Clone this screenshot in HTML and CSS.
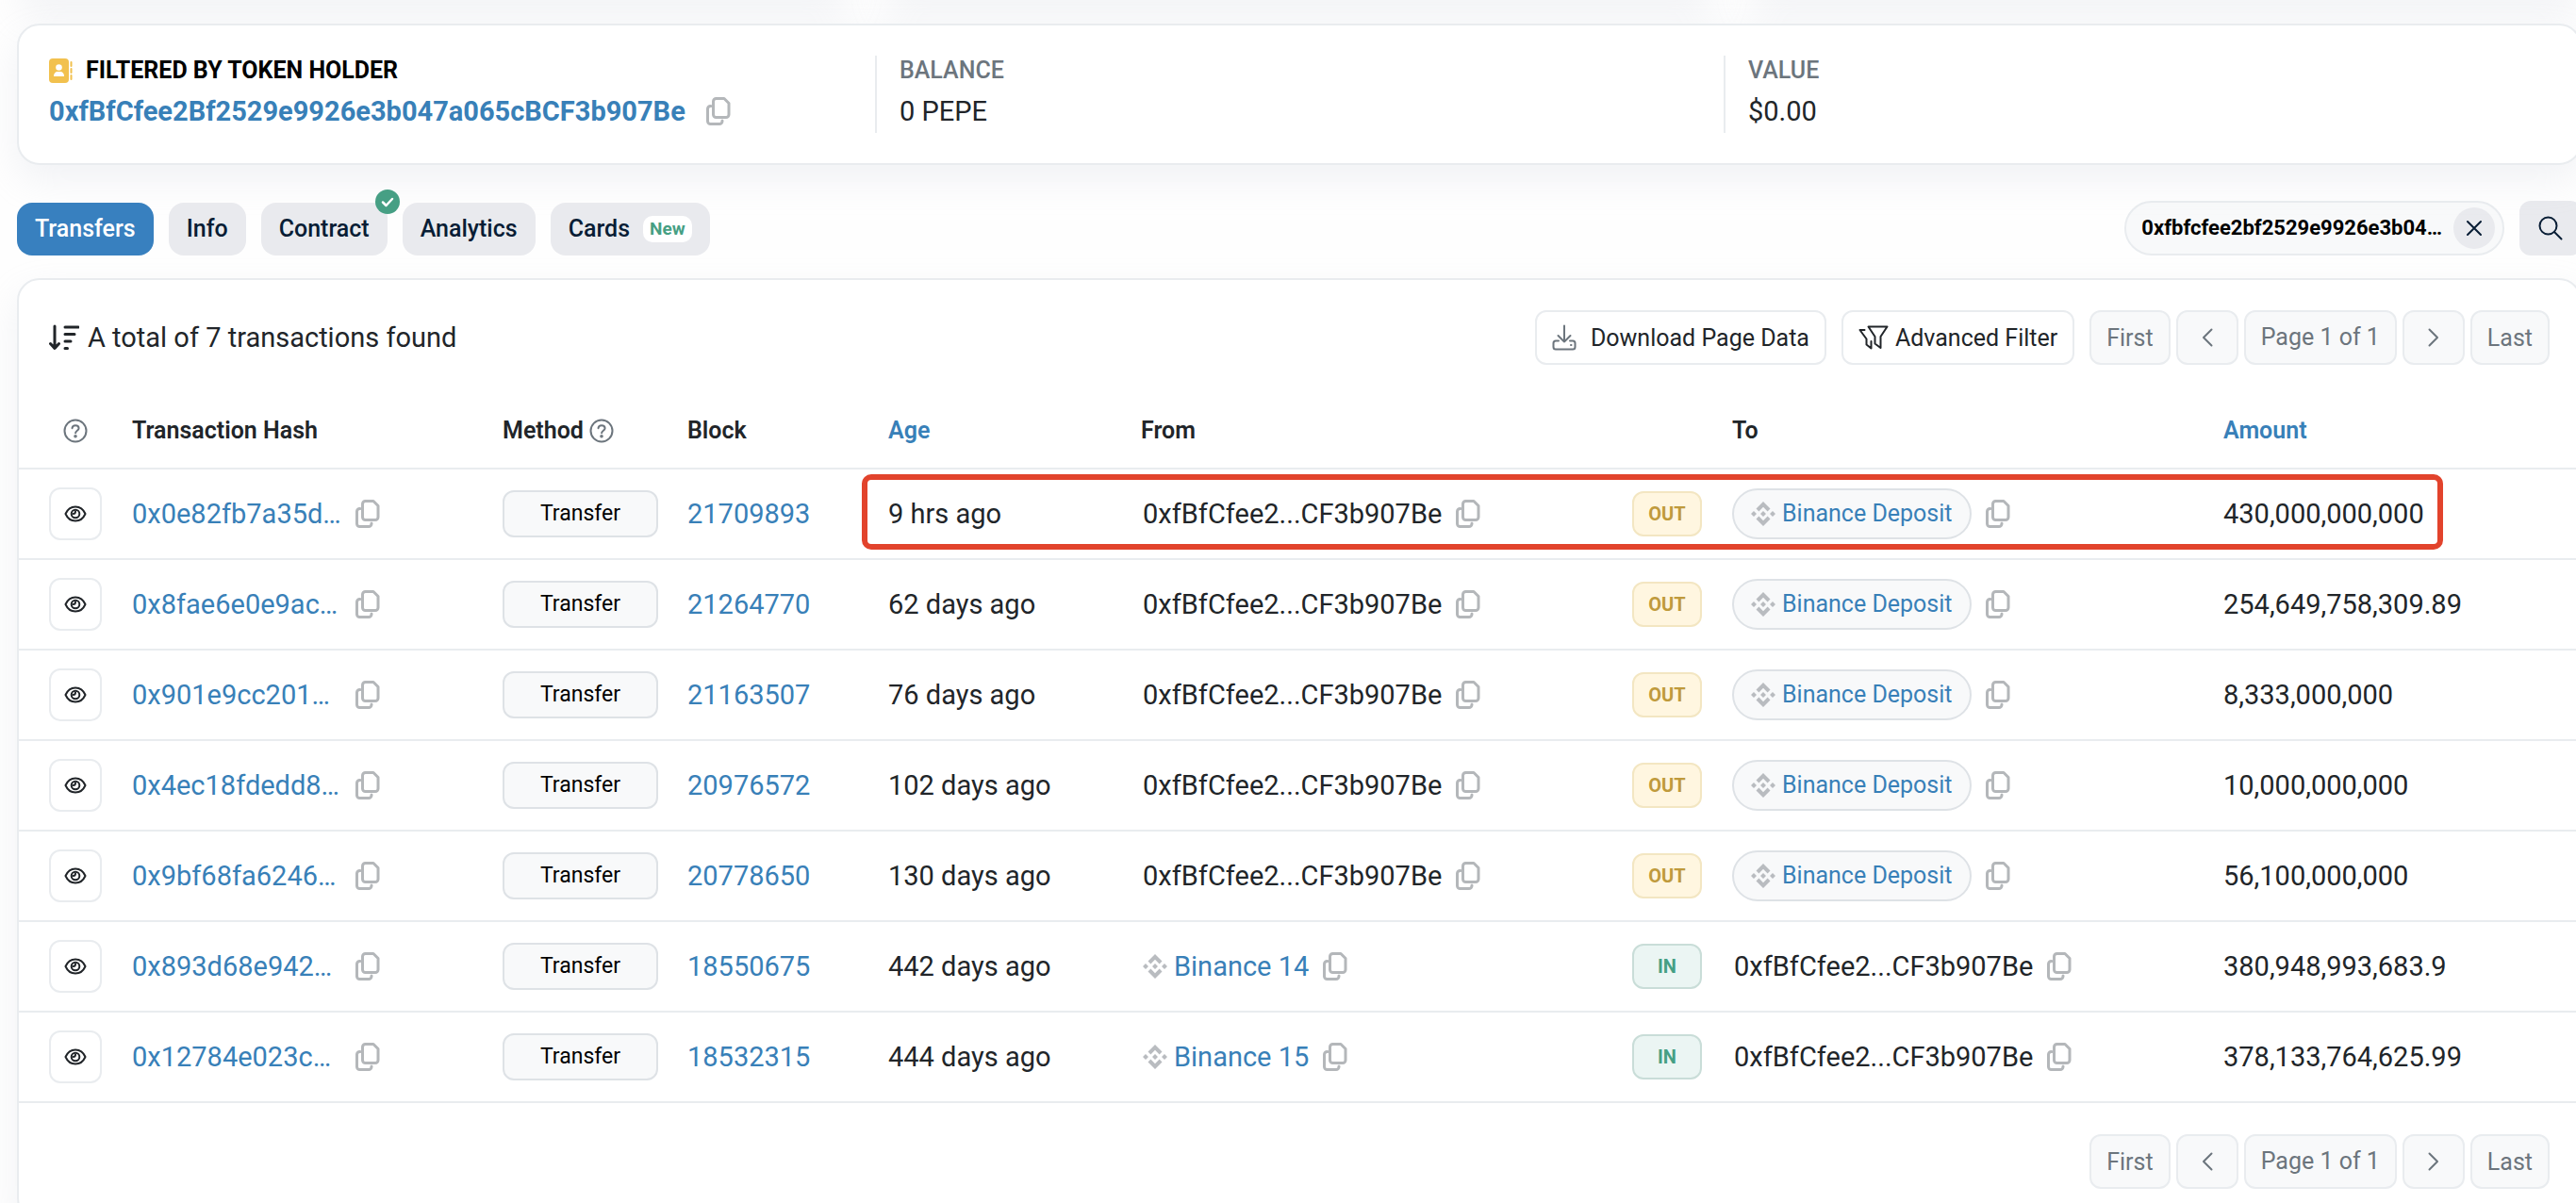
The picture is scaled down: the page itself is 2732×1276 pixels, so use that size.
FILE: index.html
```html
<!DOCTYPE html>
<html lang="en">
<head>
  <meta charset="UTF-8">
  <title>Token Transfers</title>
  <meta name="viewport" content="width=device-width, initial-scale=1.0">
  <link rel="stylesheet" href="styles.css">
</head>

<body>
  <!-- Icons -->
  <svg class="sprite" aria-hidden="true">
    <symbol id="i-copy" viewBox="0 0 26 30">
      <path d="M10.500 1.500h8.500l5 5v12a3 3 0 0 1-3 3h-10.500a3 3 0 0 1-3-3v-14a3 3 0 0 1 3-3z"/>
      <path d="M5 9.500h-.5a3 3 0 0 0-3 3v13a3 3 0 0 0 3 3h9.500a3 3 0 0 0 3-3v-.5"/>
    </symbol>
    <symbol id="i-help" viewBox="0 0 26 26">
      <circle cx="13" cy="13" r="11.500"/>
      <path d="M9.500 10.200c.2-2 1.500-3 3.500-3s3.600 1.200 3.600 3c0 2.400-3.500 2.600-3.500 5"/>
      <circle cx="13" cy="18.700" r=".8"/>
    </symbol>
    <symbol id="i-eye" viewBox="0 0 24 18">
      <path d="M1.500 9C3.500 4.500 7.200 1.500 12 1.500S20.500 4.500 22.500 9c-2 4.500-5.700 7.500-10.500 7.500S3.500 13.500 1.500 9z"/>
      <circle cx="12" cy="9" r="4.300"/>
      <path d="M12 6.500a2.500 2.500 0 0 1-2.500 2.500"/>
    </symbol>
    <symbol id="i-bnb" viewBox="0 0 26 26">
      <path d="M13 0l7.500 7.500-2.900 2.900L13 5.800l-4.600 4.600-2.900-2.900zM3 10l3 3-3 3-3-3zM23 10l3 3-3 3-3-3zM13 10l3 3-3 3-3-3zM8.400 15.600l4.600 4.600 4.600-4.600 2.900 2.900L13 26l-7.500-7.500z"/>
    </symbol>
    <symbol id="i-left" viewBox="0 0 12 20">
      <path d="M10.500 1.500L2 10l8.500 8.500"/>
    </symbol>
    <symbol id="i-right" viewBox="0 0 12 20">
      <path d="M1.500 1.500L10 10l-8.500 8.500"/>
    </symbol>
  </svg>

  <main class="page">
    <div class="overview">
      <div></div>
      <div></div>
      <div></div>
    </div>

    <!-- Holder summary -->
    <section class="card summary">
      <div class="summary-item">
        <h2 class="summary-label holder">
          <svg class="book" viewBox="0 0 25 26"><rect x="0" y="0" width="21" height="26" rx="4" fill="#f2c14e"/><path d="M23.500 4v4M23.500 11v4M23.500 18v4" stroke="#f2c14e" stroke-width="2"/><circle cx="10.500" cy="9.500" r="3.300" fill="#fff"/><path d="M5 19c0-3.500 2-5 4-5h3c2 0 4 1.500 4 5z" fill="#fff"/></svg>
          FILTERED BY TOKEN HOLDER
        </h2>
        <p><a href="#holder" class="strong">0xfBfCfee2Bf2529e9926e3b047a065cBCF3b907Be</a>
          <button class="copy" aria-label="Copy address"><svg><use href="#i-copy"/></svg></button></p>
      </div>
      <div class="summary-item">
        <h2 class="summary-label">BALANCE</h2>
        <p>0 PEPE</p>
      </div>
      <div class="summary-item">
        <h2 class="summary-label">VALUE</h2>
        <p>$0.00</p>
      </div>
    </section>

    <!-- Tabs and search -->
    <div class="tab-bar">
      <nav class="tabs">
        <a href="#transfers" class="tab active">Transfers</a>
        <a href="#info" class="tab">Info</a>
        <a href="#contract" class="tab">Contract
          <svg class="verified" viewBox="0 0 26 26"><circle cx="13" cy="13" r="13" fill="#469f84"/><path d="M8 13.500l3.500 3.500 6.500-7" fill="none" stroke="#fff" stroke-width="2.500" stroke-linecap="round" stroke-linejoin="round"/></svg>
        </a>
        <a href="#analytics" class="tab">Analytics</a>
        <a href="#cards" class="tab">Cards <span class="new">New</span></a>
      </nav>
      <div class="search">
        <div class="filter-chip">
          <span>0xfbfcfee2bf2529e9926e3b04…</span>
          <button class="clear" aria-label="Clear filter"><svg viewBox="0 0 18 18"><path d="M2 2l14 14M16 2L2 16"/></svg></button>
        </div>
        <button class="search-btn" aria-label="Search"><svg viewBox="0 0 26 26"><circle cx="10.500" cy="10.500" r="9"/><path d="M17 17l7.500 7.500"/></svg></button>
      </div>
    </div>

    <!-- Transactions -->
    <section class="card transactions" id="transfers">
      <div class="toolbar">
        <p class="total">
          <svg viewBox="0 0 32 28"><path d="M6 2v23M1.500 20.500L6 25.500l4.500-5M17 3h14M17 10.500h10M17 18h6M17 25.500h2.500"/></svg>
          A total of 7 transactions found
        </p>
        <div class="actions">
          <button class="btn download">
            <svg viewBox="0 0 26 28"><path d="M13 1.500v17M6.500 12l6.500 6.500 6.500-6.500M7 17.500H4a2.500 2.500 0 0 0-2.500 2.500v4A2.500 2.500 0 0 0 4 26.500h18a2.500 2.500 0 0 0 2.500-2.500v-4a2.500 2.500 0 0 0-2.500-2.500h-3M20 22h.5"/></svg>
            Download Page Data
          </button>
          <button class="btn filter">
            <svg viewBox="0 0 32 26"><path d="M10.500 1.500h20l-7 10.500v12l-6-4.500V12zM6.500 5H1.500l7 9.500v6l5 4V17"/></svg>
            Advanced Filter
          </button>
          <nav class="pager">
            <button class="page-btn" disabled>First</button>
            <button class="page-btn arrow" disabled aria-label="Previous"><svg><use href="#i-left"/></svg></button>
            <span class="page-btn">Page 1 of 1</span>
            <button class="page-btn arrow" disabled aria-label="Next"><svg><use href="#i-right"/></svg></button>
            <button class="page-btn" disabled>Last</button>
          </nav>
        </div>
      </div>

      <div class="table-wrap">
        <div class="highlight"></div>
        <table>
          <colgroup>
            <col class="c-view"><col class="c-hash"><col class="c-method"><col class="c-block"><col class="c-age"><col class="c-from"><col class="c-dir"><col class="c-to"><col>
          </colgroup>
          <thead>
            <tr>
              <th><svg class="help"><use href="#i-help"/></svg></th>
              <th>Transaction Hash</th>
              <th>Method <svg class="help"><use href="#i-help"/></svg></th>
              <th>Block</th>
              <th><a href="#age">Age</a></th>
              <th>From</th>
              <th></th>
              <th>To</th>
              <th><a href="#amount">Amount</a></th>
            </tr>
          </thead>
          <tbody>
            <tr>
              <td><button class="view" aria-label="View"><svg><use href="#i-eye"/></svg></button></td>
              <td><div class="hash"><a href="#tx1">0x0e82fb7a35d…</a><button class="copy" aria-label="Copy"><svg><use href="#i-copy"/></svg></button></div></td>
              <td><span class="method">Transfer</span></td>
              <td><a href="#block">21709893</a></td>
              <td>9 hrs ago</td>
              <td><div class="addr"><span class="plain">0xfBfCfee2...CF3b907Be</span><button class="copy" aria-label="Copy"><svg><use href="#i-copy"/></svg></button></div></td>
              <td><span class="dir out">OUT</span></td>
              <td><div class="addr"><a href="#to" class="pill"><svg class="bnb"><use href="#i-bnb"/></svg>Binance Deposit</a><button class="copy" aria-label="Copy"><svg><use href="#i-copy"/></svg></button></div></td>
              <td>430,000,000,000</td>
            </tr>
            <tr>
              <td><button class="view" aria-label="View"><svg><use href="#i-eye"/></svg></button></td>
              <td><div class="hash"><a href="#tx2">0x8fae6e0e9ac…</a><button class="copy" aria-label="Copy"><svg><use href="#i-copy"/></svg></button></div></td>
              <td><span class="method">Transfer</span></td>
              <td><a href="#block">21264770</a></td>
              <td>62 days ago</td>
              <td><div class="addr"><span class="plain">0xfBfCfee2...CF3b907Be</span><button class="copy" aria-label="Copy"><svg><use href="#i-copy"/></svg></button></div></td>
              <td><span class="dir out">OUT</span></td>
              <td><div class="addr"><a href="#to" class="pill"><svg class="bnb"><use href="#i-bnb"/></svg>Binance Deposit</a><button class="copy" aria-label="Copy"><svg><use href="#i-copy"/></svg></button></div></td>
              <td>254,649,758,309.89</td>
            </tr>
            <tr>
              <td><button class="view" aria-label="View"><svg><use href="#i-eye"/></svg></button></td>
              <td><div class="hash"><a href="#tx3">0x901e9cc201…</a><button class="copy" aria-label="Copy"><svg><use href="#i-copy"/></svg></button></div></td>
              <td><span class="method">Transfer</span></td>
              <td><a href="#block">21163507</a></td>
              <td>76 days ago</td>
              <td><div class="addr"><span class="plain">0xfBfCfee2...CF3b907Be</span><button class="copy" aria-label="Copy"><svg><use href="#i-copy"/></svg></button></div></td>
              <td><span class="dir out">OUT</span></td>
              <td><div class="addr"><a href="#to" class="pill"><svg class="bnb"><use href="#i-bnb"/></svg>Binance Deposit</a><button class="copy" aria-label="Copy"><svg><use href="#i-copy"/></svg></button></div></td>
              <td>8,333,000,000</td>
            </tr>
            <tr>
              <td><button class="view" aria-label="View"><svg><use href="#i-eye"/></svg></button></td>
              <td><div class="hash"><a href="#tx4">0x4ec18fdedd8…</a><button class="copy" aria-label="Copy"><svg><use href="#i-copy"/></svg></button></div></td>
              <td><span class="method">Transfer</span></td>
              <td><a href="#block">20976572</a></td>
              <td>102 days ago</td>
              <td><div class="addr"><span class="plain">0xfBfCfee2...CF3b907Be</span><button class="copy" aria-label="Copy"><svg><use href="#i-copy"/></svg></button></div></td>
              <td><span class="dir out">OUT</span></td>
              <td><div class="addr"><a href="#to" class="pill"><svg class="bnb"><use href="#i-bnb"/></svg>Binance Deposit</a><button class="copy" aria-label="Copy"><svg><use href="#i-copy"/></svg></button></div></td>
              <td>10,000,000,000</td>
            </tr>
            <tr>
              <td><button class="view" aria-label="View"><svg><use href="#i-eye"/></svg></button></td>
              <td><div class="hash"><a href="#tx5">0x9bf68fa6246…</a><button class="copy" aria-label="Copy"><svg><use href="#i-copy"/></svg></button></div></td>
              <td><span class="method">Transfer</span></td>
              <td><a href="#block">20778650</a></td>
              <td>130 days ago</td>
              <td><div class="addr"><span class="plain">0xfBfCfee2...CF3b907Be</span><button class="copy" aria-label="Copy"><svg><use href="#i-copy"/></svg></button></div></td>
              <td><span class="dir out">OUT</span></td>
              <td><div class="addr"><a href="#to" class="pill"><svg class="bnb"><use href="#i-bnb"/></svg>Binance Deposit</a><button class="copy" aria-label="Copy"><svg><use href="#i-copy"/></svg></button></div></td>
              <td>56,100,000,000</td>
            </tr>
            <tr>
              <td><button class="view" aria-label="View"><svg><use href="#i-eye"/></svg></button></td>
              <td><div class="hash"><a href="#tx6">0x893d68e942…</a><button class="copy" aria-label="Copy"><svg><use href="#i-copy"/></svg></button></div></td>
              <td><span class="method">Transfer</span></td>
              <td><a href="#block">18550675</a></td>
              <td>442 days ago</td>
              <td><div class="addr"><a href="#from" class="named"><svg class="bnb"><use href="#i-bnb"/></svg>Binance 14</a><button class="copy" aria-label="Copy"><svg><use href="#i-copy"/></svg></button></div></td>
              <td><span class="dir in">IN</span></td>
              <td><div class="addr"><span class="plain">0xfBfCfee2...CF3b907Be</span><button class="copy" aria-label="Copy"><svg><use href="#i-copy"/></svg></button></div></td>
              <td>380,948,993,683.9</td>
            </tr>
            <tr>
              <td><button class="view" aria-label="View"><svg><use href="#i-eye"/></svg></button></td>
              <td><div class="hash"><a href="#tx7">0x12784e023c…</a><button class="copy" aria-label="Copy"><svg><use href="#i-copy"/></svg></button></div></td>
              <td><span class="method">Transfer</span></td>
              <td><a href="#block">18532315</a></td>
              <td>444 days ago</td>
              <td><div class="addr"><a href="#from" class="named"><svg class="bnb"><use href="#i-bnb"/></svg>Binance 15</a><button class="copy" aria-label="Copy"><svg><use href="#i-copy"/></svg></button></div></td>
              <td><span class="dir in">IN</span></td>
              <td><div class="addr"><span class="plain">0xfBfCfee2...CF3b907Be</span><button class="copy" aria-label="Copy"><svg><use href="#i-copy"/></svg></button></div></td>
              <td>378,133,764,625.99</td>
            </tr>
          </tbody>
        </table>
      </div>

      <nav class="pager bottom">
        <button class="page-btn" disabled>First</button>
        <button class="page-btn arrow" disabled aria-label="Previous"><svg><use href="#i-left"/></svg></button>
        <span class="page-btn">Page 1 of 1</span>
        <button class="page-btn arrow" disabled aria-label="Next"><svg><use href="#i-right"/></svg></button>
        <button class="page-btn" disabled>Last</button>
      </nav>
    </section>
  </main>
</body>
</html>
```
FILE: styles.css
```css
* {
  box-sizing: border-box;
}

html {
  overflow: hidden;
}

body {
  margin: 0;
  background: #fefefe;
  color: #212529;
  font-family: Roboto, "Liberation Sans", sans-serif;
  font-size: 29px;
  line-height: 44px;
}

h2, p {
  margin: 0;
}

a {
  color: #3880b8;
  text-decoration: none;
}

button {
  font-family: inherit;
  padding: 0;
  border: none;
  background: none;
}

svg {
  fill: none;
  stroke: currentColor;
  stroke-linecap: round;
  stroke-linejoin: round;
  flex-shrink: 0;
}

.sprite {
  display: none;
}

/* General layout, the page runs slightly past the right edge */
.page {
  margin: 0 -6px 0 18px;
}

.card {
  background: #fff;
  border: 2px solid #e9ecef;
  border-radius: 24px;
  box-shadow: 0 16px 38px rgba(189, 197, 209, 0.2);
}

.overview {
  display: grid;
  grid-template-columns: repeat(3, 1fr);
  gap: 32px;
  height: 25px;
}

.overview div {
  border-radius: 24px;
  margin-top: -40px;
  height: 40px;
  box-shadow: 0 16px 38px rgba(189, 197, 209, 0.2);
}

/* Holder summary */
.summary {
  position: relative;
  display: grid;
  grid-template-columns: repeat(3, 1fr);
  padding: 32px 8px;
}

.summary-item {
  padding: 0 24px;
  height: 82px;
}

.summary-item + .summary-item {
  border-left: 2px solid #e9ecef;
}

.summary-label {
  font-size: 25px;
  line-height: 32px;
  font-weight: 500;
  color: #6c757d;
}

.holder {
  display: flex;
  align-items: center;
  gap: 14px;
  color: #000;
  font-weight: 700;
}

.book {
  width: 25px;
  height: 26px;
  stroke: none;
}

.summary p {
  display: flex;
  align-items: center;
  gap: 22px;
  margin-top: 5px;
}

.strong {
  font-weight: 700;
}

.copy {
  display: flex;
  color: #b4b7ba;
  stroke-width: 3px;
}

.copy svg {
  width: 26px;
  height: 30px;
}

/* Tabs */
.tab-bar {
  display: flex;
  justify-content: space-between;
  align-items: flex-end;
  margin: 38px 0 24px;
}

.tabs {
  display: flex;
  gap: 16px;
}

.tab {
  position: relative;
  display: flex;
  align-items: center;
  gap: 14px;
  height: 56px;
  padding: 0 19px;
  border-radius: 16px;
  background: #e9eaee;
  color: #081d35;
  font-size: 25px;
  font-weight: 500;
}

.tab.active {
  background: #3880bf;
  color: #fff;
}

.verified {
  position: absolute;
  top: -14px;
  right: -13px;
  width: 26px;
  height: 26px;
  stroke: none;
}

.new {
  padding: 0 7px;
  border-radius: 10px;
  background: #fff;
  color: #469f84;
  font-size: 19px;
  font-weight: 700;
  line-height: 28px;
}

.search {
  display: flex;
  gap: 16px;
}

.filter-chip {
  display: flex;
  align-items: center;
  gap: 12px;
  height: 58px;
  padding: 0 8px 0 16px;
  border: 2px solid #e9ecef;
  border-radius: 29px;
  background: #f8f9fa;
  color: #000;
  font-size: 22px;
  font-weight: 700;
}

.clear {
  display: grid;
  place-items: center;
  width: 44px;
  height: 44px;
  border-radius: 50%;
  background: #e9eaee;
  color: #081d35;
}

.clear svg {
  width: 18px;
  height: 18px;
  stroke-width: 2px;
}

.search-btn {
  display: grid;
  place-items: center;
  width: 66px;
  height: 58px;
  border-radius: 12px;
  background: #e9eaee;
  color: #081d35;
}

.search-btn svg {
  width: 26px;
  height: 26px;
  stroke-width: 2px;
}

/* Toolbar */
.transactions {
  padding: 32px 0;
}

.toolbar {
  display: flex;
  justify-content: space-between;
  align-items: center;
  padding: 0 32px;
}

.total {
  display: flex;
  align-items: center;
  gap: 9px;
}

.total svg {
  width: 32px;
  height: 28px;
  stroke-width: 3px;
}

.actions {
  display: flex;
  gap: 16px;
}

.btn {
  display: flex;
  align-items: center;
  height: 58px;
  padding: 0 16px;
  border: 2px solid #e9ecef;
  border-radius: 12px;
  background: #fff;
  color: #212529;
  font-size: 25px;
}

.download {
  gap: 15px;
}

.download svg {
  width: 26px;
  height: 28px;
  color: #6c757d;
  stroke-width: 2px;
}

.filter {
  gap: 7px;
}

.filter svg {
  width: 32px;
  height: 26px;
  stroke-width: 2px;
}

.pager {
  display: flex;
  gap: 6px;
}

.pager.bottom {
  justify-content: flex-end;
  padding: 33px 32px 0;
}

.page-btn {
  display: flex;
  align-items: center;
  justify-content: center;
  height: 58px;
  padding: 0 16px;
  border: 2px solid #e9ecef;
  border-radius: 12px;
  background: #f8f9fa;
  color: #6c757d;
  font-size: 25px;
}

.arrow {
  width: 66px;
}

.arrow svg {
  width: 12px;
  height: 20px;
  stroke-width: 2px;
}

/* Transactions table */
.table-wrap {
  position: relative;
  margin-top: 30px;
}

table {
  width: 100%;
  table-layout: fixed;
  border-collapse: collapse;
}

.c-view { width: 104px; }
.c-hash { width: 393px; }
.c-method { width: 196px; }
.c-block { width: 213px; }
.c-age { width: 268px; }
.c-from { width: 521px; }
.c-dir { width: 106px; }
.c-to { width: 521px; }

th, td {
  padding: 0 0 0 16px;
  border-bottom: 2px solid #e9ecef;
  text-align: left;
  white-space: nowrap;
}

th:first-child, td:first-child {
  padding-left: 32px;
}

th {
  height: 80px;
  font-size: 25px;
  font-weight: 600;
}

td {
  height: 96px;
}

.help {
  width: 26px;
  height: 26px;
  color: #6c757d;
  stroke-width: 2px;
  vertical-align: -5px;
}

th:first-child .help {
  display: block;
  margin-left: 15px;
}

.view {
  display: grid;
  place-items: center;
  width: 56px;
  height: 56px;
  border: 2px solid #e9ecef;
  border-radius: 12px;
  background: #fff;
  color: #212529;
}

.view svg {
  width: 24px;
  height: 18px;
  stroke-width: 2px;
}

.hash {
  display: flex;
  align-items: center;
  justify-content: space-between;
  width: 263px;
}

.method {
  display: block;
  width: 165px;
  border: 2px solid #dee2e6;
  border-radius: 12px;
  background: #f8f9fa;
  color: #000;
  font-size: 23px;
  line-height: 46px;
  text-align: center;
}

.addr {
  display: flex;
  align-items: center;
  gap: 15px;
}

.plain, .named {
  padding-left: 2px;
}

.named, .pill {
  display: flex;
  align-items: center;
  gap: 7px;
}

.pill {
  height: 54px;
  padding: 0 18px;
  border: 2px solid #dee2e6;
  border-radius: 27px;
  background: #f8f9fa;
  font-size: 25px;
}

.bnb {
  width: 26px;
  height: 26px;
  fill: #b9bcc0;
  stroke: none;
}

.dir {
  display: block;
  width: 74px;
  border: 2px solid;
  border-radius: 12px;
  font-size: 20px;
  font-weight: 700;
  line-height: 44px;
  text-align: center;
}

.out {
  background: #fff6e0;
  border-color: #f3e6c2;
  color: #bf9a3c;
}

.in {
  background: #ebf5f3;
  border-color: #c9ddd8;
  color: #469f84;
}

/* Marker around the latest transfer */
.highlight {
  position: absolute;
  top: 86px;
  left: 894px;
  width: 1677px;
  height: 80px;
  border: 6px solid #e2432c;
  border-radius: 10px;
}
```
